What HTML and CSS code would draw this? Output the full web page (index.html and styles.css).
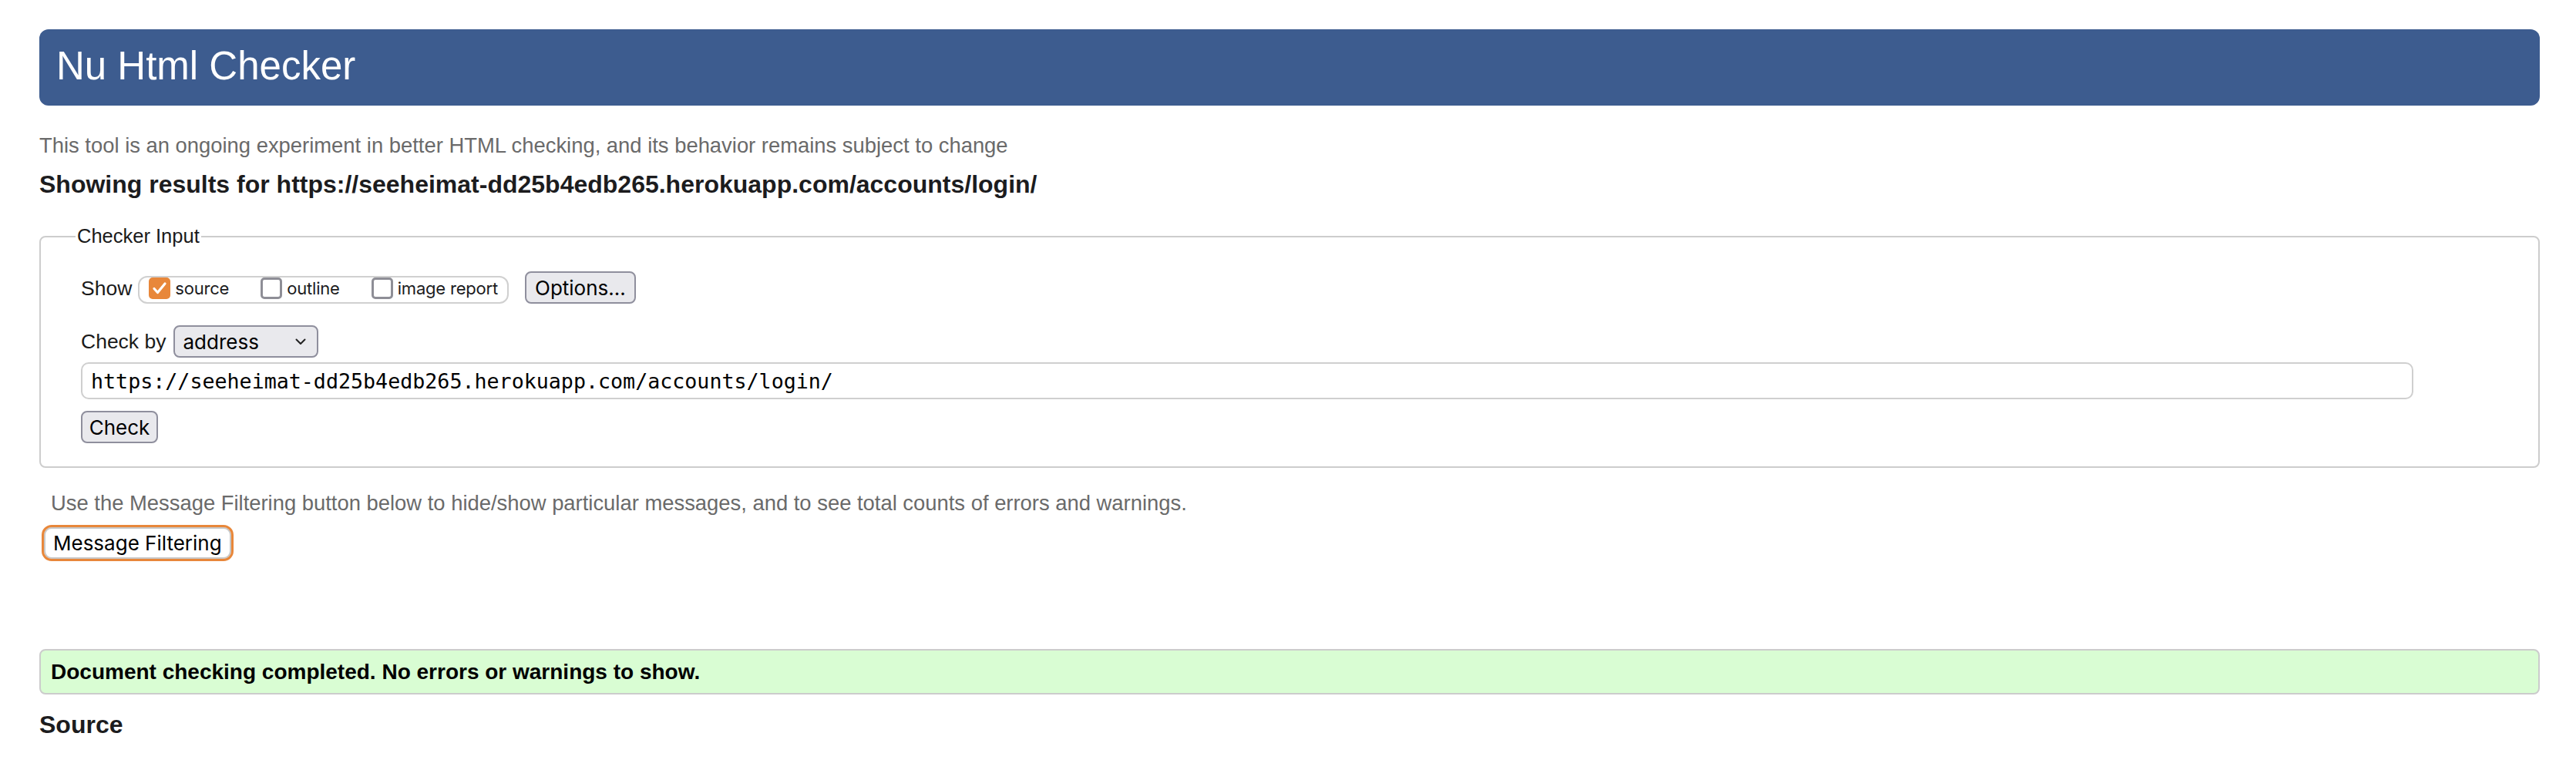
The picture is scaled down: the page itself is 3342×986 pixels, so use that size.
FILE: index.html
```html
<!DOCTYPE html>
<html lang="en">
<head>
<meta charset="utf-8">
<title>Nu Html Checker</title>
<link rel="stylesheet" href="styles.css">
</head>
<body>
<header class="masthead"><h1 class="title">Nu Html Checker</h1></header>
<p class="intro">This tool is an ongoing experiment in better HTML checking, and its behavior remains subject to change</p>
<h2 class="results-for">Showing results for https://seeheimat-dd25b4edb265.herokuapp.com/accounts/login/</h2>
<fieldset class="checker">
  <legend class="checker-legend">Checker Input</legend>
  <div class="show-row">
    <span class="row-label show-label">Show</span>
    <div class="pill">
      <label class="opt"><span class="box box-on"><svg viewBox="0 0 28 28" width="28" height="28"><path d="M7 14.5l4.5 5L21 8" fill="none" stroke="#fff" stroke-width="3.2" stroke-linecap="round" stroke-linejoin="round"/></svg></span><span class="opt-text">source</span></label>
      <label class="opt"><span class="box"></span><span class="opt-text">outline</span></label>
      <label class="opt"><span class="box"></span><span class="opt-text">image report</span></label>
    </div>
    <button class="btn options-btn">Options...</button>
  </div>
  <div class="checkby-row">
    <span class="row-label">Check by</span>
    <div class="select"><span>address</span><svg viewBox="0 0 14 9" width="14" height="9"><path d="M1.5 1.5l5.5 5.5 5.5-5.5" fill="none" stroke="#222" stroke-width="2" stroke-linecap="round" stroke-linejoin="round"/></svg></div>
  </div>
  <input class="url" type="text" value="https://seeheimat-dd25b4edb265.herokuapp.com/accounts/login/">
  <div class="check-row"><button class="btn check-btn">Check</button></div>
</fieldset>
<p class="filter-note">Use the Message Filtering button below to hide/show particular messages, and to see total counts of errors and warnings.</p>
<div class="filter-row"><button class="btn filter-btn">Message Filtering</button></div>
<div class="success">Document checking completed. No errors or warnings to show.</div>
<h2 class="source-title">Source</h2>
</body>
</html>
```
FILE: styles.css
```css
html, body { background: #fff; }
body {
  margin: 0;
  padding: 38px 47px 0 51px;
  font-family: "Liberation Sans", Arial, sans-serif;
  color: #1a1a1a;
}
.masthead {
  height: 99px;
  background: #3d5c8f;
  border-radius: 12px;
  padding-left: 22px;
  box-sizing: border-box;
}
.title {
  margin: 0;
  font-size: 51px;
  font-weight: normal;
  line-height: 95px;
  color: #fff;
}
.intro {
  margin: 36px 0 0;
  font-size: 27.4px;
  line-height: 32px;
  color: #6a6a6a;
}
.results-for {
  margin: 16px 0 0;
  font-size: 32px;
  line-height: 37px;
  font-weight: bold;
  color: #1c1c1e;
}
.checker {
  margin: 34px 0 0;
  padding: 31px 0 30px 52px;
  border: 2px solid #cdcdcd;
  border-radius: 8px;
  min-width: 0;
}
.checker-legend {
  margin-left: -7px;
  padding: 0 2px;
  font-size: 25.5px;
  color: #1a1a1a;
}
.show-row {
  display: flex;
  align-items: flex-end;
  height: 42px;
}
.row-label {
  font-size: 26.5px;
  line-height: 30px;
  color: #1a1a1a;
}
.show-label {
  margin-right: 8px;
  margin-bottom: 5px;
}
.pill {
  display: flex;
  align-items: flex-start;
  gap: 41px;
  height: 36px;
  box-sizing: border-box;
  border: 2px solid #d0d0d0;
  border-radius: 12px;
  padding: 0 12px 0 12px;
}
.opt {
  display: flex;
  align-items: flex-start;
  gap: 6px;
}
.box {
  width: 28px;
  height: 28px;
  box-sizing: border-box;
  border: 3px solid #8e8e96;
  border-radius: 5px;
  background: #fff;
  flex: none;
}
.box svg { display: block; }
.box-on {
  border: none;
  background: #e8873a;
}
.opt-text {
  font-family: Inter, "Noto Sans", sans-serif;
  font-size: 22px;
  letter-spacing: -0.2px;
  line-height: 28px;
  color: #1c1c1e;
}
.btn {
  font-family: Inter, "Noto Sans", sans-serif;
  font-size: 26px;
  color: #000;
  background: #e9e9ed;
  border: 2px solid #8f8f9d;
  border-radius: 8px;
  height: 42px;
  padding: 0 11px;
  box-sizing: border-box;
}
.options-btn { margin-left: 21px; }
.checkby-row {
  display: flex;
  align-items: center;
  gap: 10px;
  margin-top: 28px;
}
.select {
  display: flex;
  align-items: center;
  justify-content: space-between;
  width: 188px;
  height: 42px;
  box-sizing: border-box;
  padding: 0 14px 0 10px;
  background: #e9e9ed;
  border: 2px solid #8f8f9d;
  border-radius: 8px;
  font-family: Inter, "Noto Sans", sans-serif;
  font-size: 26px;
  color: #000;
}
.url {
  display: block;
  margin-top: 6px;
  width: 3026px;
  height: 48px;
  box-sizing: border-box;
  border: 2px solid #cfcfcf;
  border-radius: 10px;
  padding: 0 11px;
  font-family: "DejaVu Sans Mono", monospace;
  font-size: 26.67px;
  color: #000;
  background: #fff;
  outline: none;
}
.check-row { margin-top: 15px; }
.check-btn { width: 100px; padding: 0; }
.filter-note {
  margin: 30px 0 0;
  padding-left: 15px;
  font-size: 27.4px;
  line-height: 32px;
  color: #6a6a6a;
}
.filter-row {
  margin-top: 15px;
  padding-left: 6px;
}
.filter-btn {
  height: 41px;
  padding: 0 10px;
  font-size: 26px;
  background: #fff;
  border: 2px solid #c8c8c8;
  border-radius: 10px;
  outline: 3px solid #e8873a;
  outline-offset: 0;
}
.success {
  margin-top: 117px;
  height: 59px;
  box-sizing: border-box;
  border: 2px solid #cccccc;
  border-radius: 8px;
  background: #d9fdd3;
  padding-left: 13px;
  font-size: 28px;
  font-weight: bold;
  line-height: 55px;
  color: #000;
}
.source-title {
  margin: 21px 0 0;
  font-size: 32px;
  line-height: 37px;
  font-weight: bold;
  color: #1c1c1e;
}
```
